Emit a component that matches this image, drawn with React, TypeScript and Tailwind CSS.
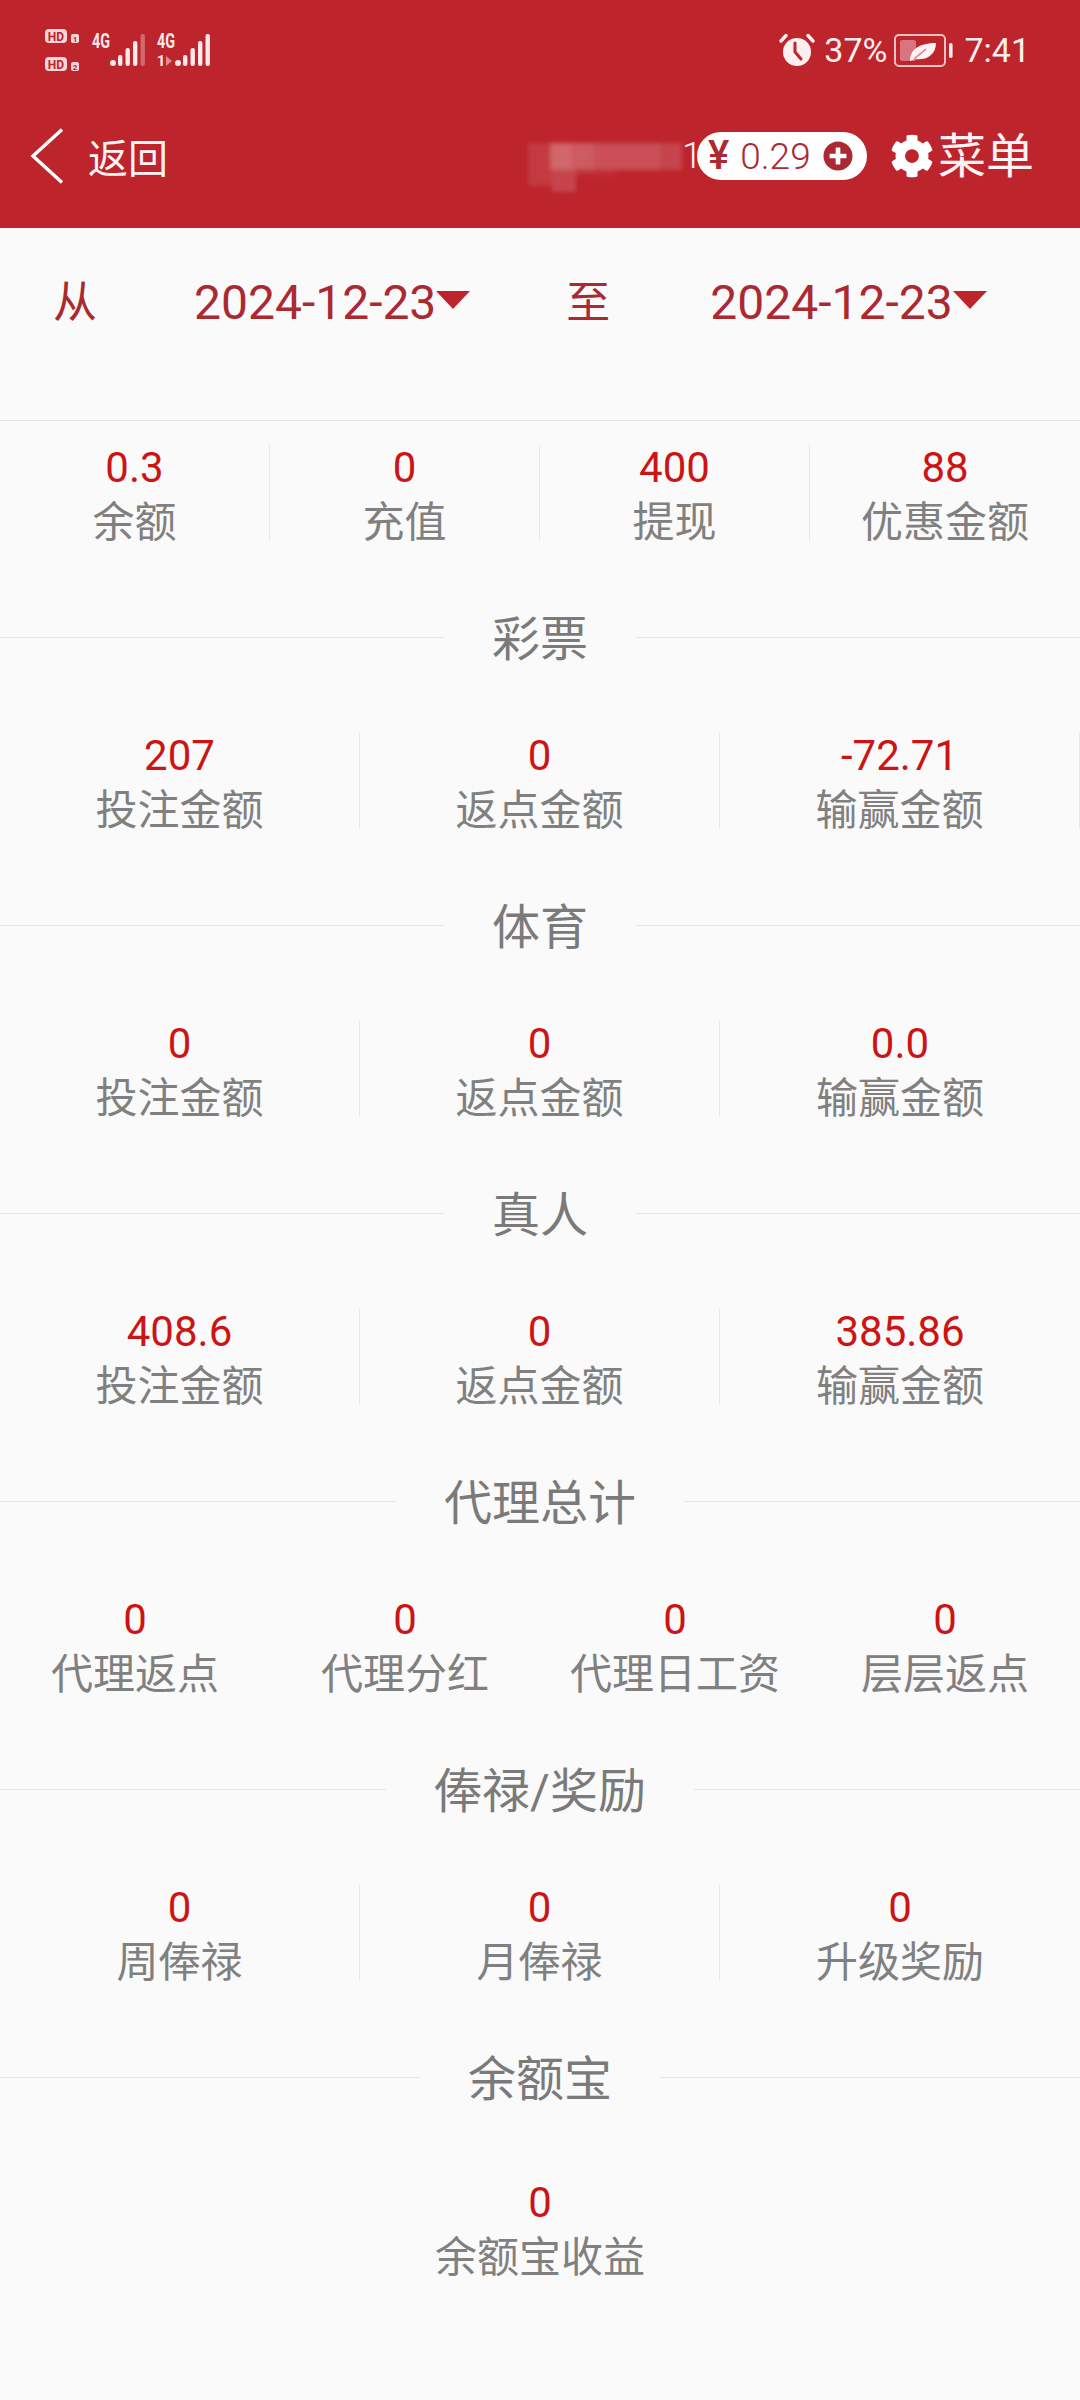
import { FaCog, FaPlusCircle } from "react-icons/fa";

const FONT = "font-['Roboto','Noto_Sans_CJK_SC',sans-serif]";

type Stat = { value: string; label: string };

function StatRow({ items, cols, divided, lastEdge }: { items: Stat[]; cols: string; divided?: boolean; lastEdge?: boolean }) {
  return (
    <div className={`grid ${cols}`}>
      {items.map((s, i) => (
        <div
          key={s.label + i}
          className={`h-[96px] pt-[2px] flex flex-col items-center ${
            divided && (i < items.length - 1 || lastEdge) ? "border-r border-[#e8e8e8]" : ""
          }`}
        >
          <div className="text-[42px] leading-[42px] text-[#cc1414]">{s.value}</div>
          <div className="mt-[9px] text-[42px] leading-[50px] text-[#808080] whitespace-nowrap">{s.label}</div>
        </div>
      ))}
    </div>
  );
}

function SectionTitle({ title }: { title: string }) {
  return (
    <div className="h-[192px] flex items-center">
      <div className="flex-1 h-px bg-[#e6e6e6]" />
      <div className="px-[48px] pt-[6px] text-[48px] leading-[60px] text-[#7a7a7a]">{title}</div>
      <div className="flex-1 h-px bg-[#e6e6e6]" />
    </div>
  );
}

function SignalBars({ last }: { last: number }) {
  return (
    <g fill="#fde8ea">
      <circle cx="3" cy="29" r="3" />
      <rect x="8" y="21" width="4.4" height="11" rx="2" />
      <rect x="15.5" y="14" width="4.4" height="18" rx="2" />
      <rect x="23" y="7" width="4.4" height="25" rx="2" />
      <rect x="30.5" y="0" width="4.4" height="32" rx="2" opacity={last} />
    </g>
  );
}

function StatusLeft() {
  return (
    <svg width="170" height="44" viewBox="0 0 170 44" className="shrink-0">
      <g fontFamily="Roboto, sans-serif" fontWeight="700" textAnchor="middle">
        <rect x="0" y="1" width="22" height="14" rx="4" fill="#f7d5d8" />
        <text x="11" y="12.5" fontSize="12" fill="#bd242c">HD</text>
        <rect x="26" y="6" width="8" height="9" rx="2" fill="#f7d5d8" />
        <text x="30" y="13.5" fontSize="8" fill="#bd242c">1</text>
        <rect x="0" y="29" width="22" height="14" rx="4" fill="#f7d5d8" />
        <text x="11" y="40.5" fontSize="12" fill="#bd242c">HD</text>
        <rect x="26" y="34" width="8" height="9" rx="2" fill="#f7d5d8" />
        <text x="30" y="41.5" fontSize="8" fill="#bd242c">2</text>
        <text x="56" y="20" fontSize="20" fill="#fde8ea" textLength="18" lengthAdjust="spacingAndGlyphs">4G</text>
        <text x="121" y="20" fontSize="20" fill="#fde8ea" textLength="18" lengthAdjust="spacingAndGlyphs">4G</text>
        <text x="116" y="38" fontSize="15" fill="#fde8ea">1</text>
      </g>
      <path d="M121 28 L127 33 L121 38 Z" fill="#e08a90" />
      <g transform="translate(65 6)">
        <SignalBars last={0.35} />
      </g>
      <g transform="translate(130 6)">
        <SignalBars last={1} />
      </g>
    </svg>
  );
}

function AlarmIcon() {
  return (
    <svg width="36" height="34" viewBox="0 0 36 34" className="shrink-0">
      <circle cx="18" cy="19" r="14" fill="#fdeff0" />
      <path d="M16 10 V19 L22 26" fill="none" stroke="#bd242c" strokeWidth="3" strokeLinecap="round" />
      <path d="M2 8 L7 2.5 M34 8 L29 2.5" stroke="#fdeff0" strokeWidth="3.4" strokeLinecap="round" />
    </svg>
  );
}

function BatteryIcon() {
  return (
    <svg width="59" height="33" viewBox="0 0 59 33" className="shrink-0">
      <rect x="1" y="1" width="50" height="31" rx="4" fill="none" stroke="#f3bfc3" strokeWidth="2" />
      <rect x="6" y="6" width="16" height="21" rx="2" fill="#d9757c" />
      <rect x="55" y="9" width="3.6" height="15" rx="1.8" fill="#fdeff0" />
      <path d="M16 27 C16 15 26 9 42 9 C42 20 33 27 21 25 L16 27 Z" fill="#fdf3f4" />
      <path d="M20 25 L32 15" stroke="#d9757c" strokeWidth="1.4" />
    </svg>
  );
}

function BlurredName() {
  const top = ["bg-white/10", "bg-white/30", "bg-white/25", "bg-white/20", "bg-white/20", "bg-white/20", "bg-white/15"];
  return (
    <div className="flex flex-col blur-[2px] mt-[22px]">
      <div className="flex">
        {top.map((c, i) => (
          <div key={i} className={`w-[22px] h-[27px] ${c}`} />
        ))}
      </div>
      <div className="flex h-[22px]">
        <div className="w-[24px] h-[16px] bg-white/10" />
        <div className="w-[24px] h-[22px] bg-white/15" />
        <div className="w-[40px] h-[6px] bg-white/5" />
      </div>
    </div>
  );
}

function DateField({ label, labelClass }: { label: string; labelClass: string }) {
  return (
    <>
      <span className={`${labelClass} text-[44px] leading-[54px]`}>{label}</span>
      <span className="text-[48px] leading-[54px] whitespace-nowrap">2024-12-23</span>
      <svg width="34" height="18" viewBox="0 0 34 18" className="mt-[15px] shrink-0">
        <path d="M0 0 H34 L17 18 Z" fill="#bd242c" />
      </svg>
    </>
  );
}

export default function App() {
  return (
    <div className={`${FONT} min-h-[2400px] bg-[#fafafa]`}>
      <header className="h-[228px] bg-[#bd242c] text-white">
        <div className="h-[100px] flex items-center justify-between pl-[45px] pr-[50px]">
          <StatusLeft />
          <div className="flex items-center text-[#fdeff0] text-[34px] leading-none">
            <AlarmIcon />
            <span className="ml-[9px]">37%</span>
            <span className="ml-[7px]"><BatteryIcon /></span>
            <span className="ml-[11px]">7:41</span>
          </div>
        </div>
        <div className="h-[112px] flex items-center pl-[30px] pr-[46px]">
          <svg width="34" height="56" viewBox="0 0 34 56" fill="none" className="shrink-0">
            <path d="M32 1.5 L3 28 L32 54.5" stroke="#ffffff" strokeWidth="3.4" />
          </svg>
          <span className="ml-[24px] pt-[8px] text-[40px] leading-none text-[#fdf3f4]">返回</span>
          <div className="ml-auto flex items-center">
            <BlurredName />
            <span className="w-[15px] text-right text-[36px] font-light leading-none text-[#fdf3f4]">1</span>
            <div className="h-[48px] w-[170px] rounded-full bg-white flex items-center pl-[11px] text-[#ab2a32]">
              <span className="text-[40px] leading-none font-medium">¥</span>
              <span className="ml-[11px] text-[37px] leading-none font-light">0.29</span>
              <FaPlusCircle size={30} color="#ab2a32" className="ml-[12px] shrink-0" />
            </div>
            <FaCog size={44} color="#ffffff" className="ml-[23px] shrink-0" />
            <span className="ml-[4px] pt-[2px] text-[48px] leading-none text-[#fdf3f4]">菜单</span>
          </div>
        </div>
      </header>

      <div className="h-[193px] pt-[48px] border-b border-[#e3e3e3] box-border flex items-start pl-[53px] text-[#ab2a32]">
        <DateField label="从" labelClass="w-[141px]" />
        <DateField label="至" labelClass="ml-[96px] w-[144px]" />
      </div>

      <div className="pt-[24px]">
        <StatRow
          cols="grid-cols-4"
          divided
          items={[
            { value: "0.3", label: "余额" },
            { value: "0", label: "充值" },
            { value: "400", label: "提现" },
            { value: "88", label: "优惠金额" },
          ]}
        />
      </div>

      <SectionTitle title="彩票" />
      <StatRow
        cols="grid-cols-3"
        divided
        lastEdge
        items={[
          { value: "207", label: "投注金额" },
          { value: "0", label: "返点金额" },
          { value: "-72.71", label: "输赢金额" },
        ]}
      />

      <SectionTitle title="体育" />
      <StatRow
        cols="grid-cols-3"
        divided
        items={[
          { value: "0", label: "投注金额" },
          { value: "0", label: "返点金额" },
          { value: "0.0", label: "输赢金额" },
        ]}
      />

      <SectionTitle title="真人" />
      <StatRow
        cols="grid-cols-3"
        divided
        items={[
          { value: "408.6", label: "投注金额" },
          { value: "0", label: "返点金额" },
          { value: "385.86", label: "输赢金额" },
        ]}
      />

      <SectionTitle title="代理总计" />
      <StatRow
        cols="grid-cols-4"
        items={[
          { value: "0", label: "代理返点" },
          { value: "0", label: "代理分红" },
          { value: "0", label: "代理日工资" },
          { value: "0", label: "层层返点" },
        ]}
      />

      <SectionTitle title="俸禄/奖励" />
      <StatRow
        cols="grid-cols-3"
        divided
        items={[
          { value: "0", label: "周俸禄" },
          { value: "0", label: "月俸禄" },
          { value: "0", label: "升级奖励" },
        ]}
      />

      <SectionTitle title="余额宝" />
      <div className="pt-[7px]">
        <StatRow cols="grid-cols-1" items={[{ value: "0", label: "余额宝收益" }]} />
      </div>
    </div>
  );
}
